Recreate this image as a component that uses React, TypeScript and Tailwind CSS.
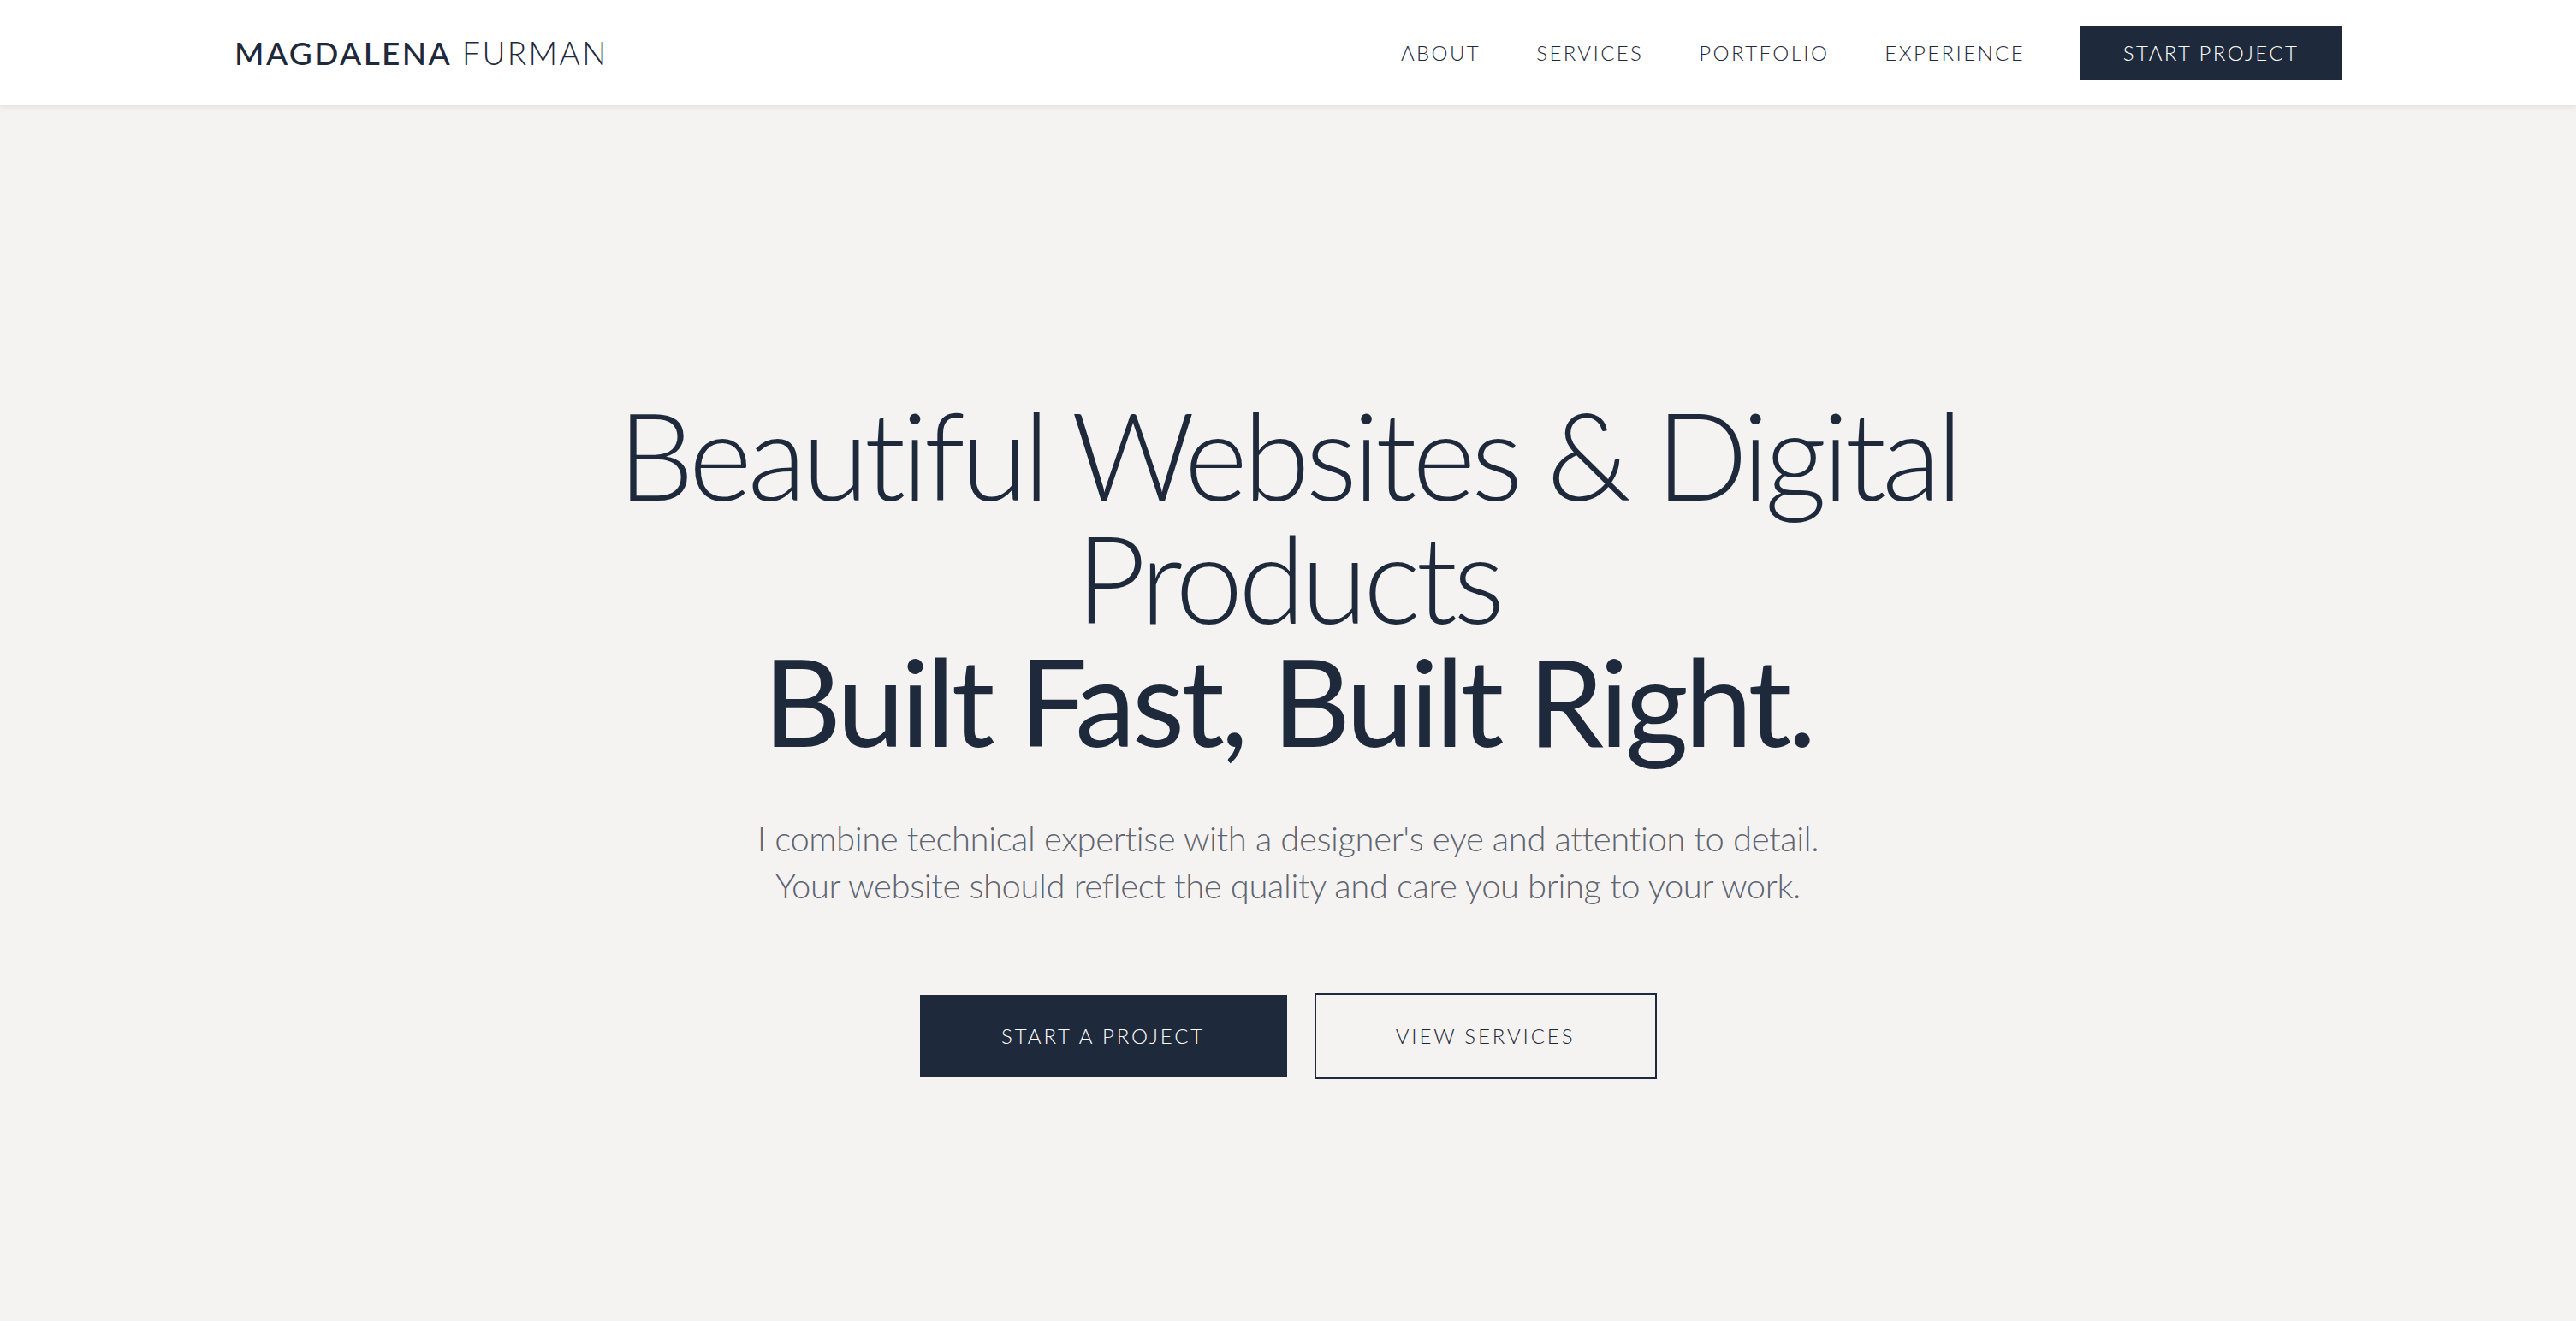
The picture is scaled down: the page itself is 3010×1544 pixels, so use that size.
import React from "react";

export default function App() {
  return (
    <div className="min-h-screen bg-[#f4f3f1] text-[#1e293b]" style={{ fontFamily: "Lato, 'Noto Sans', sans-serif" }}>
      <header className="h-[123px] bg-white shadow-[0_2px_6px_rgba(0,0,0,0.08)] relative z-10">
        <div className="mx-auto flex h-full max-w-[2462px] items-center justify-between">
          <div className="text-[37px] tracking-[0.065em] text-[#1e293b]">
            <span className="font-medium">MAGDALENA</span>{" "}
            <span className="font-light">FURMAN</span>
          </div>
          <nav className="flex items-center gap-[65px]">
            <a className="text-[24px] font-light tracking-[0.1em] text-[#1e293b]">ABOUT</a>
            <a className="text-[24px] font-light tracking-[0.1em] text-[#1e293b]">SERVICES</a>
            <a className="text-[24px] font-light tracking-[0.1em] text-[#1e293b]">PORTFOLIO</a>
            <a className="text-[24px] font-light tracking-[0.1em] text-[#1e293b]">EXPERIENCE</a>
            <a className="flex h-[64px] w-[305px] items-center justify-center bg-[#1e293b] text-[24px] font-light tracking-[0.1em] text-white">START PROJECT</a>
          </nav>
        </div>
      </header>
      <main className="flex flex-col items-center pt-[335px] pb-[283px] text-center">
        <h1 className="text-[142px] leading-[144px] tracking-[-0.037em] text-[#1e293b]">
          <span className="font-light">Beautiful Websites &amp; Digital</span>
          <br />
          <span className="font-light">Products</span>
          <br />
          <span className="font-normal tracking-[-0.03em]">Built Fast, Built Right.</span>
        </h1>
        <p className="mt-[63px] text-[40px] font-light leading-[55px] tracking-[-0.01em] text-[#5f6571]">
          I combine technical expertise with a designer's eye and attention to detail.
          <br />
          Your website should reflect the quality and care you bring to your work.
        </p>
        <div className="mt-[98px] flex items-center gap-[32px]">
          <a className="flex h-[96px] w-[429px] items-center justify-center bg-[#1e293b] text-[24px] font-light tracking-[0.12em] text-white">START A PROJECT</a>
          <a className="flex h-[100px] w-[400px] items-center justify-center border-2 border-[#1e293b] text-[24px] font-light tracking-[0.12em] text-[#1e293b]">VIEW SERVICES</a>
        </div>
      </main>
    </div>
  );
}
